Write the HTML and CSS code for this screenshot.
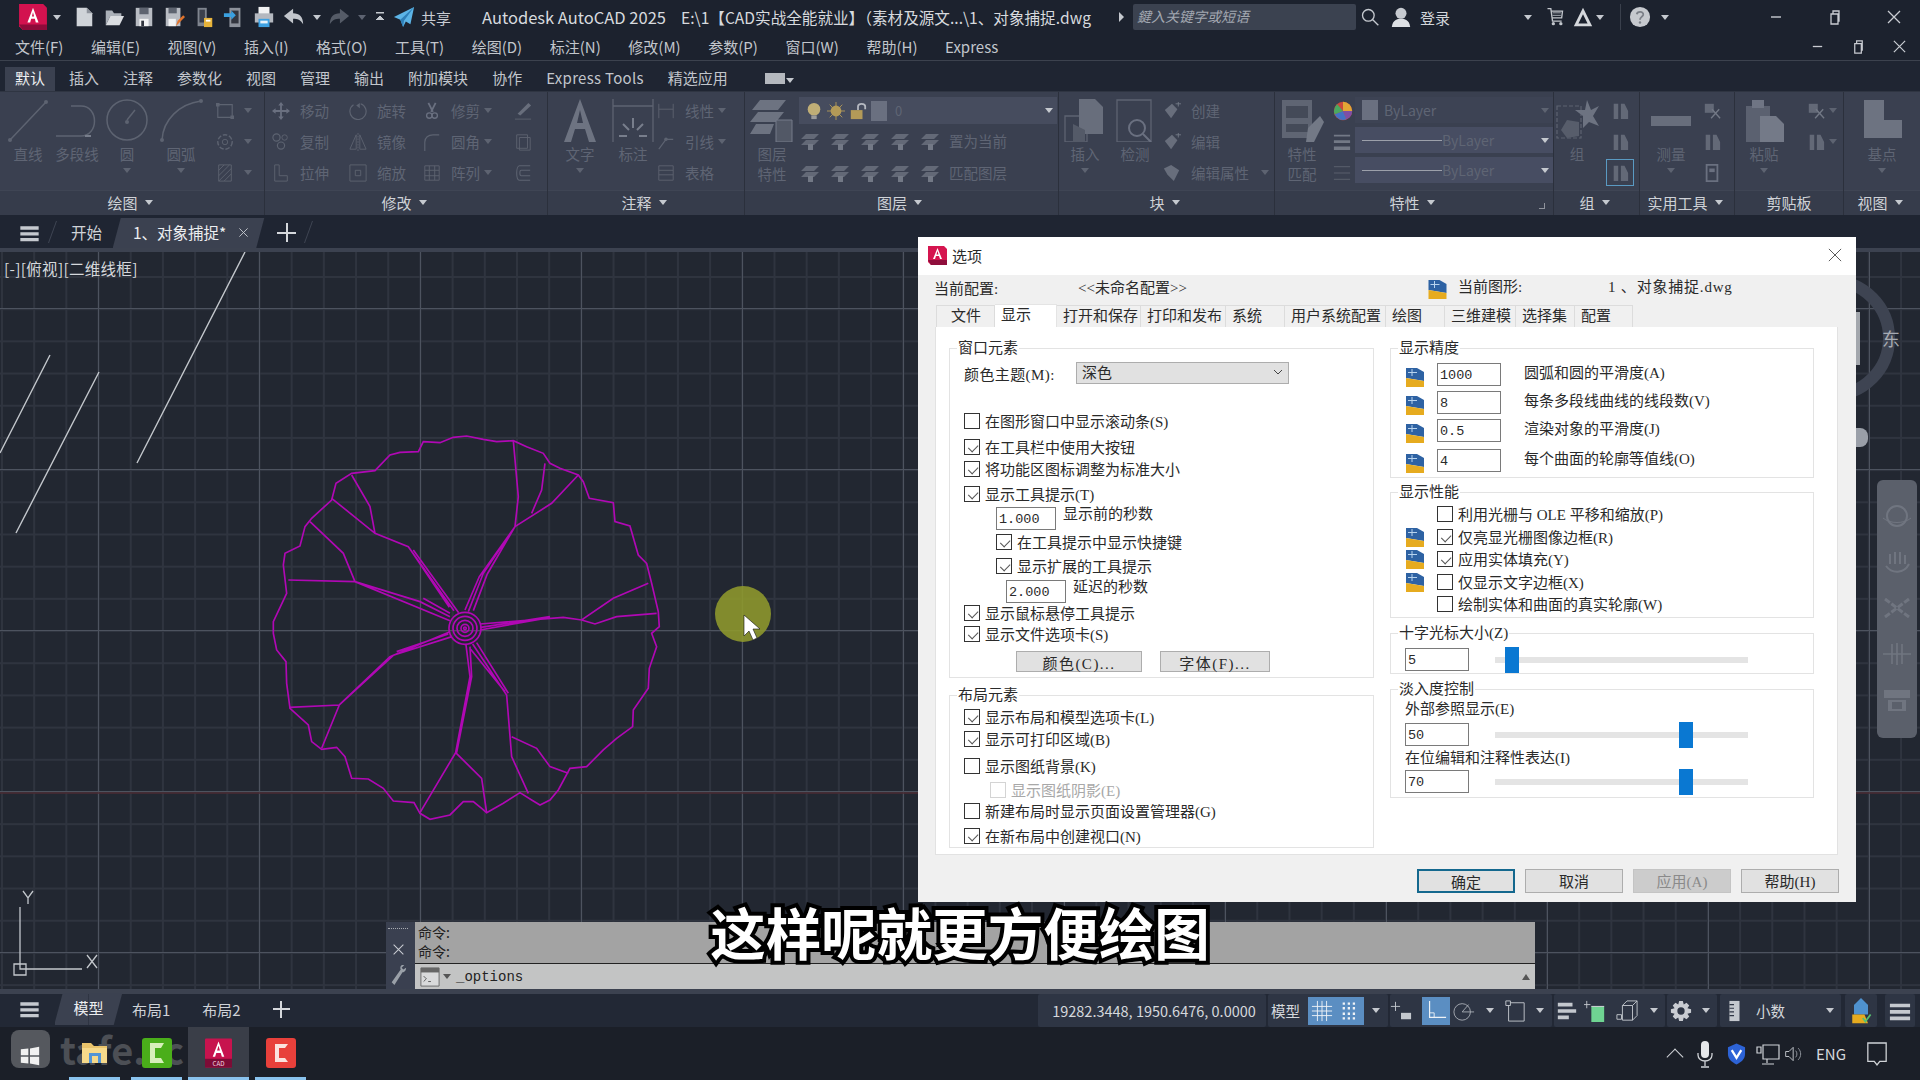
FILE: index.html
```html
<!DOCTYPE html>
<html lang="zh-CN">
<head>
    <meta charset="UTF-8">
    <title>AutoCAD 2025 - 选项</title>
    <link rel="stylesheet" href="styles.css">
</head>
<body>
<svg class="defs" width="0" height="0">
    <symbol id="a-logo" viewBox="0 0 30 28"><path d="M0 0H26L30 4V28H4L0 24Z" fill="#d3124f"/><path d="M0 22H30V28H4Z" fill="#8e0b3a"/><path d="M15 4L21 20H18L17 16H13L12 20H9ZM15 9L13.8 13.5H16.2Z" fill="#fff"/></symbol>
    <symbol id="q-new" viewBox="0 0 24 24"><path d="M4 2H15L21 8V22H4Z" fill="#cfd3d8"/><path d="M15 2V8H21Z" fill="#8e939c"/></symbol>
    <symbol id="q-open" viewBox="0 0 24 24"><path d="M3 21V5H10L12 8H20V11H8L3 21Z" fill="#aab0b8"/><path d="M3 21L8 11H23L18 21Z" fill="#dadde1"/></symbol>
    <symbol id="q-save" viewBox="0 0 24 24"><path d="M3 2H21V22H3Z" fill="#b8bcc3"/><path d="M7 2H17V9H7Z" fill="#5e6470"/><path d="M7 14H17V22H7Z" fill="#f2f3f4"/><path d="M9 16H12V22H9Z" fill="#30343e"/></symbol>
    <symbol id="q-saveas" viewBox="0 0 24 24"><path d="M3 2H19V22H3Z" fill="#b8bcc3"/><path d="M6 2H15V8H6Z" fill="#5e6470"/><path d="M6 14H14V22H6Z" fill="#f2f3f4"/><path d="M14 22L16 16L22 10L24 12L18 18Z" fill="#e0732c"/></symbol>
    <symbol id="q-cloud" viewBox="0 0 24 24"><path d="M5 2H15V22H5Z" fill="#7f858f"/><path d="M7 4H13V18H7Z" fill="#3b404c"/><path d="M12 13H21V23H12Z" fill="#e8b43a"/><path d="M14 15H19V17H14Z" fill="#fff"/></symbol>
    <symbol id="q-phone" viewBox="0 0 24 24"><path d="M7 2H19V23H7Z" fill="#8d929b"/><path d="M9 5H17V19H9Z" fill="#33363f"/><path d="M1 8H9V5L14 10L9 15V12H1Z" fill="#3aa0e0"/></symbol>
    <symbol id="q-print" viewBox="0 0 24 24"><path d="M6 1H18V9H6Z" fill="#f1f2f3"/><path d="M2 8H22V18H2Z" fill="#b4b8bf"/><path d="M6 14H18V23H6Z" fill="#3da1e2"/><path d="M8 16H16V19H8Z" fill="#e7f3fb"/></symbol>
    <symbol id="q-undo" viewBox="0 0 24 24"><path d="M1 11L11 3V8C18 8 22 12 22 20C19 15 16 14 11 14V19Z" fill="#c2c6cc"/></symbol>
    <symbol id="q-redo" viewBox="0 0 24 24"><path d="M23 11L13 3V8C6 8 2 12 2 20C5 15 8 14 13 14V19Z" fill="#555b67"/></symbol>
    <symbol id="q-share" viewBox="0 0 24 24"><path d="M23 1L1 12L8 15L11 23L14 17L19 20Z" fill="#5cb4e6"/><path d="M23 1L8 15L11 23L12 16Z" fill="#2e7fb8"/></symbol>
    <symbol id="w-search" viewBox="0 0 24 24"><circle cx="10" cy="10" r="7" fill="none" stroke="#c5c9cf" stroke-width="1.6"/><path d="M15 15L22 22" stroke="#c5c9cf" stroke-width="1.6"/></symbol>
    <symbol id="w-user" viewBox="0 0 24 24"><circle cx="12" cy="8" r="6" fill="#c6cad0"/><path d="M2 23C3 15 8 14 12 14S21 15 22 23Z" fill="#dde0e4"/></symbol>
    <symbol id="w-cart" viewBox="0 0 24 24"><path d="M3 2H7L9 17H20M8 5H21L20 13H9" fill="none" stroke="#c2c6cc" stroke-width="1.6"/><path d="M9 7H19M9 10H19" stroke="#c2c6cc"/><circle cx="10" cy="20" r="2" fill="#c2c6cc"/><circle cx="19" cy="20" r="2" fill="#c2c6cc"/></symbol>
    <symbol id="w-tri" viewBox="0 0 24 24"><path d="M12 2L22 22H2ZM12 9L7 19H17Z" fill="#d5d8dc" fill-rule="evenodd"/></symbol>
    <symbol id="w-help" viewBox="0 0 24 24"><circle cx="12" cy="12" r="11" fill="#c6c9ce"/><path d="M8.500 9C9 5.500 16 5.500 15.500 9.500C15 12 12 12 12 15" fill="none" stroke="#7c8088" stroke-width="2"/><circle cx="12" cy="18" r="1.300" fill="#7c8088"/></symbol>
    <symbol id="w-min" viewBox="0 0 16 16"><path d="M3 8H13" stroke="#c9ccd2" stroke-width="1.400"/></symbol>
    <symbol id="w-max" viewBox="0 0 16 16"><path d="M4 5H11V15H4ZM6 5V2H12V12H11" fill="none" stroke="#c9ccd2" stroke-width="1.300"/></symbol>
    <symbol id="w-close" viewBox="0 0 16 16"><path d="M2 2L14 14M14 2L2 14" stroke="#c9ccd2" stroke-width="1.300"/></symbol>

    <symbol id="r-line" viewBox="0 0 44 44"><path d="M4 42L40 4" stroke="#5d6371" stroke-width="1.500"/><circle cx="4" cy="42" r="2" fill="#5d6371"/><circle cx="40" cy="4" r="2" fill="#5d6371"/></symbol>
    <symbol id="r-pline" viewBox="0 0 44 44"><path d="M1 38H26C44 38 44 8 26 8H16" fill="none" stroke="#5d6371" stroke-width="1.500"/><path d="M30 38L36 38" stroke="#787e8c" stroke-width="2"/></symbol>
    <symbol id="r-circle" viewBox="0 0 44 44"><circle cx="22" cy="22" r="20" fill="none" stroke="#5d6371" stroke-width="1.500"/><path d="M22 22L30 12" stroke="#5d6371" stroke-width="1.500"/><circle cx="22" cy="24" r="2" fill="#5d6371"/></symbol>
    <symbol id="r-arc" viewBox="0 0 44 44"><path d="M3 42C4 22 20 6 42 3" fill="none" stroke="#5d6371" stroke-width="1.500"/><circle cx="3" cy="42" r="2" fill="#5d6371"/><circle cx="42" cy="3" r="2" fill="#5d6371"/></symbol>
    <symbol id="r-text" viewBox="0 0 44 44"><path d="M22 1L38 44H31L27 31H17L13 44H6ZM22 12L19 25H25Z" fill="#6d7381" fill-rule="evenodd"/></symbol>
    <symbol id="r-dim" viewBox="0 0 44 44"><path d="M2 1V44M42 1V44M2 8H42" fill="none" stroke="#5d6371" stroke-width="1.300"/><path d="M22 20V30M12 26L18 32M32 26L26 32M8 38H16M28 38H36" stroke="#787e8c" stroke-width="2"/></symbol>
    <symbol id="r-layers" viewBox="0 0 44 44"><path d="M10 2H36L28 12H2ZM8 14H34L26 24H0ZM6 26H24L20 36H0Z" fill="#6d7381"/><path d="M26 22H42V44H26Z" fill="#525866" stroke="#757b89"/></symbol>
    <symbol id="r-insert" viewBox="0 0 44 44"><path d="M2 18H24V44H2Z" fill="none" stroke="#5d6371" stroke-width="1.300"/><path d="M16 1H32L40 9V36H16Z" fill="#686e7c"/><path d="M10 26L22 32V44H10Z" fill="#545a68"/></symbol>
    <symbol id="r-detect" viewBox="0 0 44 44"><path d="M4 2H38V44H4Z" fill="none" stroke="#5d6371" stroke-width="1.300"/><circle cx="24" cy="30" r="8" fill="none" stroke="#6a7080" stroke-width="2"/><path d="M30 36L38 44" stroke="#6a7080" stroke-width="2"/></symbol>
    <symbol id="r-match" viewBox="0 0 44 44"><path d="M2 2H32V40H2Z" fill="#5f6573"/><path d="M6 8H28V20H6ZM6 26H28V34H6Z" fill="#444a58"/><path d="M28 30L40 18L44 24L34 44H26Z" fill="#737986"/></symbol>
    <symbol id="r-wheel" viewBox="0 0 24 24"><circle cx="12" cy="12" r="11" fill="#c9483e"/><path d="M12 12V1A11 11 0 0 1 23 12Z" fill="#e3a635"/><path d="M12 12H23A11 11 0 0 1 16 22Z" fill="#7e4fa6"/><path d="M12 12L16 22A11 11 0 0 1 2 16Z" fill="#4471c4"/><path d="M12 12L2 16A11 11 0 0 1 5 4Z" fill="#4aa85f"/></symbol>
    <symbol id="r-group" viewBox="0 0 44 44"><path d="M2 8V40H26V8Z" fill="none" stroke="#5d6371" stroke-width="1.200" stroke-dasharray="4 2"/><path d="M32 2L36 12L44 8L38 18L44 28L34 24L28 30L28 18L20 12H30Z" fill="#6d7381"/><path d="M12 22L24 24V38L12 40L6 32Z" fill="#575d6b"/></symbol>
    <symbol id="r-measure" viewBox="0 0 44 44"><path d="M2 18H42V28H2Z" fill="#686e7c"/></symbol>
    <symbol id="r-paste" viewBox="0 0 44 44"><path d="M4 8H28V44H4Z" fill="#5b6170"/><path d="M10 2H22V10H10Z" fill="#6f7584"/><path d="M18 18H34L42 26V44H18Z" fill="#747a88"/></symbol>
    <symbol id="r-base" viewBox="0 0 44 44"><path d="M4 2H24V22H42V40H4Z" fill="#6d7381"/></symbol>

    <symbol id="s-rect" viewBox="0 0 20 20"><path d="M2 3H18V17H2Z" fill="none" stroke="#5d6371" stroke-width="1.300"/><path d="M0 1H4V5H0ZM16 15H20V19H16Z" fill="#5d6371"/></symbol>
    <symbol id="s-hatch" viewBox="0 0 20 20"><path d="M3 1H17V19H3Z" fill="none" stroke="#5d6371"/><path d="M3 7L9 1M3 13L15 1M3 19L17 5M9 19L17 11" stroke="#5d6371"/></symbol>
    <symbol id="s-ring" viewBox="0 0 20 20"><circle cx="10" cy="10" r="8" fill="none" stroke="#5d6371" stroke-width="1.600" stroke-dasharray="5 2"/><circle cx="10" cy="10" r="3" fill="none" stroke="#5d6371"/></symbol>
    <symbol id="s-move" viewBox="0 0 20 20"><path d="M10 0L13 4H11V9H16V7L20 10L16 13V11H11V16H13L10 20L7 16H9V11H4V13L0 10L4 7V9H9V4H7Z" fill="#6a7080"/></symbol>
    <symbol id="s-rotate" viewBox="0 0 20 20"><path d="M5 3A9 9 0 1 0 13 2" fill="none" stroke="#5d6371" stroke-width="1.300"/><path d="M12 1V7L8 4Z" fill="#5d6371"/></symbol>
    <symbol id="s-trim" viewBox="0 0 20 20"><path d="M6 1L11 11M14 1L9 11" stroke="#6a7080" stroke-width="2"/><circle cx="7" cy="15" r="3" fill="none" stroke="#6a7080" stroke-width="1.500"/><circle cx="13" cy="15" r="3" fill="none" stroke="#6a7080" stroke-width="1.500"/></symbol>
    <symbol id="s-erase" viewBox="0 0 20 20"><path d="M16 1L19 4L7 15L4 13Z" fill="#686e7c"/><path d="M1 19H19" stroke="#5d6371"/></symbol>
    <symbol id="s-copy" viewBox="0 0 20 20"><circle cx="5" cy="5" r="4" fill="none" stroke="#5d6371" stroke-width="1.300"/><circle cx="14" cy="5" r="3" fill="none" stroke="#5d6371"/><circle cx="10" cy="14" r="4" fill="none" stroke="#5d6371" stroke-width="1.300"/></symbol>
    <symbol id="s-mirror" viewBox="0 0 20 20"><path d="M8 2L1 18H8ZM12 2L19 18H12Z" fill="none" stroke="#5d6371"/><path d="M10 0V20" stroke="#5d6371" stroke-dasharray="2 1"/></symbol>
    <symbol id="s-fillet" viewBox="0 0 20 20"><path d="M2 20V10C2 5 6 2 11 2H18" fill="none" stroke="#5d6371" stroke-width="1.300"/></symbol>
    <symbol id="s-stretch" viewBox="0 0 20 20"><path d="M3 1V19H17V13H8V1Z" fill="none" stroke="#5d6371"/></symbol>
    <symbol id="s-scale" viewBox="0 0 20 20"><path d="M1 1H19V19H1Z" fill="none" stroke="#5d6371"/><path d="M7 7H13V13H7Z" fill="none" stroke="#5d6371"/></symbol>
    <symbol id="s-array" viewBox="0 0 20 20"><path d="M2 2H18V18H2ZM2 7H18M2 13H18M7 2V18M13 2V18" fill="none" stroke="#5d6371"/></symbol>
    <symbol id="s-explode" viewBox="0 0 20 20"><path d="M3 2H15V17H3ZM6 5H18V19H6Z" fill="none" stroke="#5d6371"/></symbol>
    <symbol id="s-offset" viewBox="0 0 20 20"><path d="M18 2H6C2 2 2 18 6 18H18M18 7H8C6 7 6 13 8 13H18" fill="none" stroke="#5d6371" stroke-width="1.200"/></symbol>
    <symbol id="s-dimline" viewBox="0 0 20 20"><path d="M2 2V18M18 2V18M2 8H18" stroke="#5d6371" fill="none"/></symbol>
    <symbol id="s-leader" viewBox="0 0 20 20"><path d="M2 18L10 7H18" fill="none" stroke="#5d6371" stroke-width="1.300"/><circle cx="10" cy="7" r="2" fill="#5d6371"/></symbol>
    <symbol id="s-table" viewBox="0 0 20 20"><path d="M2 2H18V18H2ZM2 7H18M2 12H18" fill="none" stroke="#5d6371"/></symbol>
    <symbol id="s-lay" viewBox="0 0 20 20"><path d="M6 3H19L14 8H1ZM6 9H19L14 14H1Z" fill="#636977"/><path d="M8 13H13V19H8Z" fill="#737986"/></symbol>
    <symbol id="s-create" viewBox="0 0 20 20"><path d="M2 9L10 2L16 8L9 18Z" fill="#686e7c"/><path d="M14 2H20M17 0V5" stroke="#737986"/></symbol>
    <symbol id="s-attr" viewBox="0 0 20 20"><path d="M1 5L9 1L18 7L12 19L5 12Z" fill="#686e7c"/></symbol>
    <symbol id="s-weight" viewBox="0 0 20 20"><path d="M1 2H19V4H1ZM1 8H19V11H1ZM1 15H19V19H1Z" fill="#737986"/></symbol>
    <symbol id="s-ltype" viewBox="0 0 20 20"><path d="M1 3H19M1 10H19M1 17H19" stroke="#5d6371"/></symbol>
    <symbol id="s-sel" viewBox="0 0 20 20"><path d="M3 2H8V19H3ZM11 2H15L19 10V19H11Z" fill="#636977"/></symbol>
    <symbol id="s-cut" viewBox="0 0 20 20"><path d="M2 2H12V12H2Z" fill="#636977"/><path d="M10 8L19 18M18 8L9 18" stroke="#737986" stroke-width="1.500"/></symbol>
    <symbol id="s-calc" viewBox="0 0 20 20"><path d="M4 1H16V19H4Z" fill="none" stroke="#6a7080" stroke-width="2"/><path d="M7 5H13V9H7Z" fill="#6a7080"/></symbol>
    <symbol id="s-bulb" viewBox="0 0 20 20"><circle cx="10" cy="8" r="7" fill="#c0ae76"/><path d="M7 15H13V19H7Z" fill="#9b9b9b"/></symbol>
    <symbol id="s-sun" viewBox="0 0 20 20"><circle cx="10" cy="10" r="6" fill="#b39a58"/><path d="M10 0V20M0 10H20M3 3L17 17M17 3L3 17" stroke="#b39a58"/></symbol>
    <symbol id="s-lock" viewBox="0 0 20 20"><path d="M2 9H15V19H2Z" fill="#b39a58"/><path d="M10 9V5C10 1 18 1 18 5V8" fill="none" stroke="#b4b8c0" stroke-width="2"/></symbol>

    <symbol id="d-a" viewBox="0 0 19 20"><path d="M0 1H16L19 4V20H3L0 17Z" fill="#d5154f"/><path d="M0 15H19V20H3Z" fill="#8f0e3c"/><path d="M9.500 3L14 14H12L11 11H8L7 14H5ZM9.500 6L8.500 9.500H10.500Z" fill="#fff"/></symbol>
    <symbol id="d-dwg" viewBox="0 0 18 20"><path d="M0 1H11L18 5V14L0 11Z" fill="#2e62a3"/><path d="M0 11L18 14V20H0Z" fill="#e6ab1f"/><path d="M6 2V9M2 5.500H11" stroke="#b7d3ee"/></symbol>

    <symbol id="b-grid" viewBox="0 0 24 24"><path d="M7 1V23M17 1V23M1 7H23M1 17H23M12 1V23M1 12H23" stroke="#f0f3f7"/></symbol>
    <symbol id="b-dots" viewBox="0 0 24 24"><path d="M4 4H20M4 9H20M4 15H20M4 20H20" stroke="#f0f3f7" stroke-width="2.500" stroke-dasharray="2.500 3"/></symbol>
    <symbol id="b-snap" viewBox="0 0 24 24"><path d="M6 2V12M1 7H11" stroke="#c4c8ce"/><path d="M12 14H23V21H12Z" fill="#c4c8ce"/></symbol>
    <symbol id="b-ortho" viewBox="0 0 24 24"><path d="M5 1V19H23" fill="none" stroke="#eef2f6" stroke-width="1.300"/><path d="M5 14H10V19" fill="none" stroke="#eef2f6"/></symbol>
    <symbol id="b-polar" viewBox="0 0 24 24"><circle cx="10" cy="13" r="9" fill="none" stroke="#a7acb4"/><path d="M10 13L17 5M10 13H23" stroke="#a7acb4"/></symbol>
    <symbol id="b-box" viewBox="0 0 24 24"><path d="M5 3H22V23H5Z" fill="none" stroke="#c4c8ce"/><path d="M2 1H7V6H2Z" fill="#2e3544" stroke="#c4c8ce"/></symbol>
    <symbol id="b-lines" viewBox="0 0 24 24"><path d="M2 3H18V7H2ZM2 10H22V14H2ZM2 17H14V21H2Z" fill="#c4c8ce"/></symbol>
    <symbol id="b-green" viewBox="0 0 24 24"><path d="M8 7H22V24H8Z" fill="#6fd492"/><path d="M3 1V9M0 5H7" stroke="#c4c8ce"/><path d="M8 7H22" stroke="#d9dce0"/></symbol>
    <symbol id="b-cube" viewBox="0 0 24 24"><path d="M7 6L12 1H23V17L18 22H7ZM7 6H18V22M18 6L23 1" fill="none" stroke="#c4c8ce"/><path d="M1 16H6V21H1Z" fill="#2e3544" stroke="#c4c8ce"/></symbol>
    <symbol id="b-gear" viewBox="0 0 24 24"><path d="M10 1H14L15 5L18 3L21 6L19 9L23 10V14L19 15L21 18L18 21L15 19L14 23H10L9 19L6 21L3 18L5 15L1 14V10L5 9L3 6L6 3L9 5ZM12 8A4 4 0 1 0 12 16A4 4 0 1 0 12 8Z" fill="#c9ccd2" fill-rule="evenodd"/></symbol>
    <symbol id="b-ruler" viewBox="0 0 24 24"><path d="M7 1H18V23H7Z" fill="#c4c8ce"/><path d="M7 5H12M7 9H12M7 13H12M7 17H12" stroke="#2e3544" stroke-width="1.300"/></symbol>
    <symbol id="b-annot" viewBox="0 0 24 32"><path d="M12 1L20 9H4Z" fill="#4f92cf"/><path d="M4 9H20V20H4Z" fill="#4f92cf"/><path d="M2 20H16L20 30H2Z" fill="#e6ab1f"/><path d="M14 24L17 28L23 20" fill="none" stroke="#56c06f" stroke-width="2"/></symbol>
    <symbol id="b-menu" viewBox="0 0 24 24"><path d="M1 4H23V8H1ZM1 11H23V15H1ZM1 18H23V22H1Z" fill="#c5c9cf"/></symbol>
    <symbol id="b-wrench" viewBox="0 0 20 24"><path d="M15 1C13 1 12 4 13 6L3 20L6 23L15 9C18 9 19 6 19 4L16 6L14 4L17 1Z" fill="#9aa0a8"/></symbol>
    <symbol id="b-cmd" viewBox="0 0 22 22"><path d="M1 1H21V21H1Z" fill="#d9dadb" stroke="#666"/><path d="M1 1H21V6H1Z" fill="#666"/><path d="M4 10L7 13L4 16M9 16H12" fill="none" stroke="#555"/></symbol>

    <symbol id="t-win" viewBox="0 0 24 24"><path d="M1 4L10 3V11H1ZM12 3L23 1V11H12ZM1 13H10V21L1 20ZM12 13H23V23L12 21Z" fill="#f1f1f1"/></symbol>
    <symbol id="t-folder" viewBox="0 0 28 24"><path d="M1 2H10L13 5H26V22H1Z" fill="#e9c36b"/><path d="M1 7H26V22H1Z" fill="#f6d98a"/><path d="M8 12H20V22H17V15H11V22H8Z" fill="#5294d6"/></symbol>
    <symbol id="t-cam" viewBox="0 0 30 30"><rect width="30" height="30" rx="3" fill="#4aae1a"/><path d="M22 5H8V25H22L19 20H13V10H19Z" fill="#d6efb9"/></symbol>
    <symbol id="t-red" viewBox="0 0 30 30"><rect width="30" height="30" rx="3" fill="#e8403b"/><path d="M22 6H9V24H22L19 20H13V10H19Z" fill="#fbe2de"/></symbol>
    <symbol id="t-mic" viewBox="0 0 16 28"><rect x="4" y="1" width="8" height="17" rx="4" fill="#e4e6e9"/><path d="M1 13V15C1 23 15 23 15 15V13M8 21V26M4 27H12" fill="none" stroke="#d0d3d7" stroke-width="1.300"/></symbol>
    <symbol id="t-shield" viewBox="0 0 20 24"><path d="M10 1L19 5V12C19 18 14 21 10 23C6 21 1 18 1 12V5Z" fill="#2d63d6"/><path d="M5 8L10 16L15 8" fill="none" stroke="#fff" stroke-width="2.400"/></symbol>
    <symbol id="t-net" viewBox="0 0 24 24"><path d="M7 3H23V17H7ZM1 5H5V11H1ZM11 17V21M6 22H18" fill="none" stroke="#d0d3d7" stroke-width="1.200"/></symbol>
    <symbol id="t-vol" viewBox="0 0 24 24"><path d="M2 9H6L11 4V20L6 15H2Z" fill="none" stroke="#b8bcc2" stroke-width="1.200"/><path d="M14 8C16 10 16 14 14 16M17 5C21 9 21 15 17 19" fill="none" stroke="#8e939b" stroke-width="1.200"/></symbol>
    <symbol id="t-note" viewBox="0 0 24 28"><path d="M2 2H22V22H15L12 26L9 22H2Z" fill="none" stroke="#d0d3d7" stroke-width="1.400"/></symbol>
    <symbol id="v-orbit" viewBox="0 0 30 24"><circle cx="15" cy="12" r="10" fill="none" stroke="#787d88" stroke-width="2"/><path d="M1 14C8 20 22 20 29 14" fill="none" stroke="#787d88"/></symbol>
    <symbol id="v-pan" viewBox="0 0 30 24"><path d="M8 4V14M13 2V14M18 2V14M23 5V14M4 16C10 24 22 24 27 14" fill="none" stroke="#787d88" stroke-width="2"/></symbol>
    <symbol id="v-zoom" viewBox="0 0 30 24"><path d="M3 3L27 21M27 3L3 21" stroke="#787d88" stroke-width="3" stroke-dasharray="6 2"/></symbol>
    <symbol id="v-wheel" viewBox="0 0 30 24"><path d="M10 2V22M15 1V23M20 2V22M1 12H29" stroke="#787d88" stroke-width="1.600"/></symbol>
    <symbol id="v-show" viewBox="0 0 30 24"><path d="M2 2H28V10H2ZM6 12H24V23H6Z" fill="#787d88"/><path d="M10 14H20V21H10Z" fill="#5b606b"/></symbol>
</svg>

<div class="app">
    <header class="titlebar">
        <svg class="logo"><use href="#a-logo"/></svg>
        <i class="caret c12"></i>
        <svg class="qa"><use href="#q-new"/></svg>
        <svg class="qa"><use href="#q-open"/></svg>
        <svg class="qa"><use href="#q-save"/></svg>
        <svg class="qa"><use href="#q-saveas"/></svg>
        <svg class="qa"><use href="#q-cloud"/></svg>
        <svg class="qa"><use href="#q-phone"/></svg>
        <svg class="qa"><use href="#q-print"/></svg>
        <svg class="qa"><use href="#q-undo"/></svg>
        <i class="caret c16"></i>
        <svg class="qa qa-redo"><use href="#q-redo"/></svg>
        <i class="caret c18 dim"></i>
        <span class="qa-more"></span>
        <svg class="qa"><use href="#q-share"/></svg>
        <span class="share">共享</span>
        <span class="app-name">Autodesk AutoCAD 2025</span>
        <span class="doc-name">E:\1【CAD实战全能就业】（素材及源文...\1、对象捕捉.dwg</span>
        <span class="arrow-r"></span>
        <div class="search">鍵入关键字或短语</div>
        <svg class="top-search"><use href="#w-search"/></svg>
        <svg class="top-user"><use href="#w-user"/></svg>
        <span class="login">登录</span>
        <i class="caret c12 login-caret"></i>
        <svg class="top-cart"><use href="#w-cart"/></svg>
        <svg class="top-tri"><use href="#w-tri"/></svg>
        <i class="caret c12"></i>
        <span class="top-sep"></span>
        <svg class="top-help"><use href="#w-help"/></svg>
        <i class="caret c12"></i>
        <div class="winbtns">
            <svg><use href="#w-min"/></svg>
            <svg><use href="#w-max"/></svg>
            <svg><use href="#w-close"/></svg>
        </div>
    </header>

    <nav class="menubar">
        <span>文件(F)</span><span>编辑(E)</span><span>视图(V)</span><span>插入(I)</span><span>格式(O)</span><span>工具(T)</span><span>绘图(D)</span><span>标注(N)</span><span>修改(M)</span><span>参数(P)</span><span>窗口(W)</span><span>帮助(H)</span><span>Express</span>
        <div class="subbtns">
            <svg><use href="#w-min"/></svg>
            <svg><use href="#w-max"/></svg>
            <svg><use href="#w-close"/></svg>
        </div>
    </nav>

    <nav class="ribtabs">
        <span class="on">默认</span><span>插入</span><span>注释</span><span>参数化</span><span>视图</span><span>管理</span><span>输出</span><span>附加模块</span><span>协作</span><span class="ext">Express Tools</span><span>精选应用</span>
        <b class="rib-switch"></b><i class="caret c10"></i>
    </nav>

    <section class="ribbon">
        <div class="rpanel p-draw">
            <div class="rbody">
                <div class="big w56"><svg><use href="#r-line"/></svg><span>直线</span></div>
                <div class="big w42"><svg><use href="#r-pline"/></svg><span>多段线</span></div>
                <div class="big w58"><svg><use href="#r-circle"/></svg><span>圆</span><i class="caret c12 dim"></i></div>
                <div class="big w50"><svg><use href="#r-arc"/></svg><span>圆弧</span><i class="caret c12 dim"></i></div>
                <div class="col3 col-draw">
                    <div class="sm"><svg><use href="#s-rect"/></svg><i class="caret c16 dim"></i></div>
                    <div class="sm"><svg><use href="#s-ring"/></svg><i class="caret c16 dim"></i></div>
                    <div class="sm"><svg><use href="#s-hatch"/></svg><i class="caret c16 dim"></i></div>
                </div>
            </div>
            <div class="rtitle">绘图<i class="caret c16"></i></div>
        </div>

        <div class="rpanel p-modify">
            <div class="rbody modify-grid">
                <div class="sm"><svg><use href="#s-move"/></svg><span>移动</span></div>
                <div class="sm"><svg><use href="#s-rotate"/></svg><span>旋转</span></div>
                <div class="sm"><svg><use href="#s-trim"/></svg><span>修剪</span><i class="caret c16 dim"></i></div>
                <div class="sm"><svg><use href="#s-erase"/></svg></div>
                <div class="sm"><svg><use href="#s-copy"/></svg><span>复制</span></div>
                <div class="sm"><svg><use href="#s-mirror"/></svg><span>镜像</span></div>
                <div class="sm"><svg><use href="#s-fillet"/></svg><span>圆角</span><i class="caret c16 dim"></i></div>
                <div class="sm"><svg><use href="#s-explode"/></svg></div>
                <div class="sm"><svg><use href="#s-stretch"/></svg><span>拉伸</span></div>
                <div class="sm"><svg><use href="#s-scale"/></svg><span>缩放</span></div>
                <div class="sm"><svg><use href="#s-array"/></svg><span>阵列</span><i class="caret c16 dim"></i></div>
                <div class="sm"><svg><use href="#s-offset"/></svg></div>
            </div>
            <div class="rtitle">修改<i class="caret c16"></i></div>
        </div>

        <div class="rpanel p-note">
            <div class="rbody">
                <div class="big w64"><svg><use href="#r-text"/></svg><span>文字</span><i class="caret c12 dim"></i></div>
                <div class="big w42"><svg><use href="#r-dim"/></svg><span>标注</span></div>
                <div class="col3 col-note">
                    <div class="sm"><svg><use href="#s-dimline"/></svg><span>线性</span><i class="caret c16 dim"></i></div>
                    <div class="sm"><svg><use href="#s-leader"/></svg><span>引线</span><i class="caret c16 dim"></i></div>
                    <div class="sm"><svg><use href="#s-table"/></svg><span>表格</span></div>
                </div>
            </div>
            <div class="rtitle">注释<i class="caret c16"></i></div>
        </div>

        <div class="rpanel p-layer">
            <div class="rbody">
                <div class="big w54"><svg><use href="#r-layers"/></svg><span>图层<br>特性</span></div>
                <div class="layer-side">
                    <div class="layer-drop">
                        <svg><use href="#s-bulb"/></svg><svg><use href="#s-sun"/></svg><svg><use href="#s-lock"/></svg>
                        <b class="swatch"></b><span>0</span><i class="caret c16 drop-caret"></i>
                    </div>
                    <div class="layer-row">
                        <svg><use href="#s-lay"/></svg><svg><use href="#s-lay"/></svg><svg><use href="#s-lay"/></svg><svg><use href="#s-lay"/></svg><svg><use href="#s-lay"/></svg>
                        <span>置为当前</span>
                    </div>
                    <div class="layer-row">
                        <svg><use href="#s-lay"/></svg><svg><use href="#s-lay"/></svg><svg><use href="#s-lay"/></svg><svg><use href="#s-lay"/></svg><svg><use href="#s-lay"/></svg>
                        <span>匹配图层</span>
                    </div>
                </div>
            </div>
            <div class="rtitle">图层<i class="caret c16"></i></div>
        </div>

        <div class="rpanel p-block">
            <div class="rbody">
                <div class="big w52"><svg><use href="#r-insert"/></svg><span>插入</span><i class="caret c12 dim"></i></div>
                <div class="big w48"><svg><use href="#r-detect"/></svg><span>检测</span></div>
                <div class="col3 col-block">
                    <div class="sm"><svg><use href="#s-create"/></svg><span>创建</span></div>
                    <div class="sm"><svg><use href="#s-create"/></svg><span>编辑</span></div>
                    <div class="sm"><svg><use href="#s-attr"/></svg><span>编辑属性</span><i class="caret c16 dim"></i></div>
                </div>
            </div>
            <div class="rtitle">块<i class="caret c16"></i></div>
        </div>

        <div class="rpanel p-prop">
            <div class="rbody">
                <div class="big w54"><svg><use href="#r-match"/></svg><span>特性<br>匹配</span></div>
                <div class="col3 col-prop">
                    <svg class="wheel"><use href="#r-wheel"/></svg>
                    <div class="sm"><svg><use href="#s-weight"/></svg></div>
                    <div class="sm"><svg><use href="#s-ltype"/></svg></div>
                </div>
                <div class="prop-drops">
                    <div class="pdrop first"><b class="swatch"></b><span>ByLayer</span><i class="caret c16 dim"></i></div>
                    <div class="pdrop"><u></u><span>ByLayer</span><i class="caret c16"></i></div>
                    <div class="pdrop"><u></u><span>ByLayer</span><i class="caret c16"></i></div>
                </div>
            </div>
            <div class="rtitle">特性<i class="caret c16"></i><em class="launcher"></em></div>
        </div>

        <div class="rpanel p-group">
            <div class="rbody">
                <div class="big w46"><svg><use href="#r-group"/></svg><span>组</span></div>
                <div class="col3 col-gr">
                    <div class="sm"><svg><use href="#s-sel"/></svg></div>
                    <div class="sm"><svg><use href="#s-sel"/></svg></div>
                    <div class="sm active-tool"><svg><use href="#s-sel"/></svg></div>
                </div>
            </div>
            <div class="rtitle">组<i class="caret c16"></i></div>
        </div>

        <div class="rpanel p-util">
            <div class="rbody">
                <div class="big w62"><svg><use href="#r-measure"/></svg><span>测量</span><i class="caret c12 dim"></i></div>
                <div class="col3">
                    <div class="sm"><svg><use href="#s-cut"/></svg></div>
                    <div class="sm"><svg><use href="#s-sel"/></svg></div>
                    <div class="sm"><svg><use href="#s-calc"/></svg></div>
                </div>
            </div>
            <div class="rtitle">实用工具<i class="caret c16"></i></div>
        </div>

        <div class="rpanel p-clip">
            <div class="rbody">
                <div class="big w58"><svg><use href="#r-paste"/></svg><span>粘贴</span><i class="caret c12 dim"></i></div>
                <div class="col3">
                    <div class="sm"><svg><use href="#s-cut"/></svg><i class="caret c16 dim"></i></div>
                    <div class="sm"><svg><use href="#s-sel"/></svg><i class="caret c16 dim"></i></div>
                </div>
            </div>
            <div class="rtitle">剪贴板</div>
        </div>

        <div class="rpanel p-view">
            <div class="rbody">
                <div class="big w76"><svg><use href="#r-base"/></svg><span>基点</span><i class="caret c12 dim"></i></div>
            </div>
            <div class="rtitle">视图<i class="caret c16"></i></div>
        </div>
    </section>

    <nav class="doctabs">
        <svg class="menu-ico"><use href="#b-menu"/></svg>
        <span class="dsep"></span>
        <span class="start">开始</span>
        <div class="doc-on"><span>1、对象捕捉*</span><svg><use href="#w-close"/></svg></div>
        <span class="plus"></span>
        <span class="dsep"></span>
    </nav>
    <div class="band"></div>

    <main class="canvas">
        <svg class="drawing" viewBox="0 252 1920 737">
            <g stroke="#c3c7cc" stroke-width="1.400">
                <path d="M50 355L0 453M99 372L16 533M245 252L137 463"/>
            </g>
            <path d="M0 793H1920" stroke="#4b2b33" stroke-width="1.500"/>
            <g transform="translate(250 420) scale(.3333)" fill="none" stroke="#b008b4" stroke-width="5">
                <path d="M520 65L570 68 610 52 650 48 700 58 740 65 790 62 830 80 880 100 900 130 930 145 985 165 1000 185 1018 235 1090 248 1095 305 1140 318 1165 405 1190 430 1205 490 1225 575 1228 620 1205 640 1220 680 1198 745 1195 805 1150 870 1148 920 1100 955 1060 990 1010 1040 960 1045 925 1110 900 1140 870 1155 845 1140 810 1118 760 1150 710 1178 695 1165 670 1145 640 1145 600 1185 540 1198 510 1180 492 1148 430 1143 400 1105 355 1077 305 1075 285 1010 260 982 215 988 185 965 175 915 120 865 110 790 108 725 80 690 70 640 70 605 110 520 100 435 105 400 150 378 165 320 185 295 245 240 258 190 305 160 375 152 420 105 450 97 505 95Z"/>
                <path d="M655 575L700 460 795 320 805 230 790 62M795 320L905 250 985 165M845 280L875 210 885 130M670 572L712 462 795 320M645 570L688 470 795 320"/>
                <path d="M612 572L475 380 375 340 245 235M598 562L475 380M375 340L360 260 305 165M626 578L490 390"/>
                <path d="M600 602L315 485 115 480M600 590L510 545 315 485M315 485L280 400 180 305M600 580L520 535"/>
                <path d="M600 635L420 710 268 855 118 862M606 650L430 706 268 855M595 642L440 695M268 855L215 985"/>
                <path d="M648 675L660 770 617 998 510 1178M660 680L665 770 620 998M617 998L695 1075 710 1178"/>
                <path d="M668 672L770 825 785 1010 835 1120M662 688L765 815M680 668L775 820M785 950L860 985 900 1040 955 1060"/>
                <path d="M690 612L940 592 995 600 1090 535 1195 490M690 630L880 596M692 622L900 590M995 600L1035 612 1100 590 1220 580"/>
                <circle cx="645" cy="625" r="48"/><circle cx="645" cy="625" r="36"/><circle cx="645" cy="625" r="24"/><circle cx="645" cy="625" r="12"/><circle cx="645" cy="625" r="4"/>
            </g>
            <g fill="none" stroke="#c3c7cc" stroke-width="1.300">
                <path d="M20 907V969H82M14 964H26V975H14Z"/>
                <path d="M23 891L28 898L33 891M28 898V904M87 955L97 968M97 955L87 968"/>
            </g>
            <g>
                <circle cx="1832" cy="338" r="57" fill="none" stroke="#3e4452" stroke-width="12"/>
                <rect x="1840" y="312" width="20" height="53" fill="#a3a7ad"/>
                <rect x="1840" y="428" width="28" height="19" rx="8" fill="#9a9fa8"/>
                <text x="1882" y="346" class="compass">东</text>
            </g>
            <circle cx="743" cy="614" r="28" fill="#8f9a2c" fill-opacity=".88"/>
            <path d="M744 615V636L749 631L753 640L757 638L753 629H760Z" fill="#fff" stroke="#111" stroke-width=".6"/>
        </svg>
        <div class="viewlabel">[-][俯视][二维线框]</div>
        <aside class="navbar">
            <svg><use href="#v-orbit"/></svg>
            <svg><use href="#v-pan"/></svg>
            <svg><use href="#v-zoom"/></svg>
            <svg><use href="#v-wheel"/></svg>
            <svg><use href="#v-show"/></svg>
        </aside>
        <div class="cmdline">
            <div class="cmd-handle">
                <span class="cmd-dots"></span>
                <svg class="cmd-x"><use href="#w-close"/></svg>
                <svg class="cmd-w"><use href="#b-wrench"/></svg>
            </div>
            <div class="cmd-main">
                <div class="cmd-hist"><div>命令:</div><div>命令:</div></div>
                <div class="cmd-input"><svg><use href="#b-cmd"/></svg><i class="caret c10 cmd-caret"></i><span>_options</span><b class="cmd-up"></b></div>
            </div>
        </div>
    </main>
    <div class="band band-b"></div>

    <footer class="statusbar">
        <div class="layout-tabs">
            <svg class="menu-ico"><use href="#b-menu"/></svg>
            <span class="lay-on">模型</span>
            <span class="lay1">布局1</span>
            <span class="lay2">布局2</span>
            <span class="plus lay-plus"></span>
        </div>
        <div class="sbar">
            <div class="sg g-coord">19282.3448, 1950.6476, 0.0000</div>
            <div class="sg g-model"><span class="model">模型</span><b class="si blue"><svg><use href="#b-grid"/></svg></b><b class="si blue"><svg><use href="#b-dots"/></svg></b><i class="caret c24"></i></div>
            <div class="sg"><b class="si w22"><svg><use href="#b-snap"/></svg></b><b class="si blue ml10"><svg><use href="#b-ortho"/></svg></b><b class="si"><svg><use href="#b-polar"/></svg></b><i class="caret c24"></i><b class="si w26"><svg><use href="#b-box"/></svg></b><i class="caret c24"></i></div>
            <div class="sg"><b class="si w25"><svg><use href="#b-lines"/></svg></b><b class="si w32"><svg><use href="#b-green"/></svg></b><b class="si w32"><svg><use href="#b-cube"/></svg></b><i class="caret c22"></i></div>
            <div class="sg"><b class="si"><svg><use href="#b-gear"/></svg></b><i class="caret c22"></i></div>
            <div class="sg g-unit"><b class="si"><svg><use href="#b-ruler"/></svg></b><span>小数</span><i class="caret c22"></i></div>
            <div class="sg g-annot"><b class="si w32"><svg class="annot"><use href="#b-annot"/></svg></b></div>
            <div class="sg g-last"><b class="si w30"><svg><use href="#b-menu"/></svg></b></div>
        </div>
    </footer>

    <footer class="taskbar">
        <div class="wm"><b class="wm-box"></b><span>tafe.cc</span></div>
        <div class="task t-start"><svg><use href="#t-win"/></svg></div>
        <div class="task t-open"><svg class="t-f"><use href="#t-folder"/></svg></div>
        <div class="task t-open t-gap"><svg><use href="#t-cam"/></svg></div>
        <div class="task t-open t-act">
            <svg class="t-c" viewBox="0 0 28 30"><rect width="28" height="30" rx="1" fill="#c7134e"/><path d="M0 21H28V30H0Z" fill="#7c0c36"/><path d="M14 3L20 19H17.500L16.300 15H11.700L10.500 19H8ZM14 7.500L12.500 12.500H15.500Z" fill="#fff"/><text x="14" y="28" text-anchor="middle" font-size="6.500" fill="#f2d7e0">CAD</text></svg>
        </div>
        <div class="task t-open t-gap2"><svg><use href="#t-red"/></svg></div>
        <div class="tray">
            <span class="tray-up"></span>
            <svg class="tr-mic"><use href="#t-mic"/></svg>
            <svg class="tr-sh"><use href="#t-shield"/></svg>
            <svg class="tr-net"><use href="#t-net"/></svg>
            <svg class="tr-vol"><use href="#t-vol"/></svg>
            <span class="eng">ENG</span>
            <svg class="tr-note"><use href="#t-note"/></svg>
        </div>
    </footer>

    <div class="dialog">
        <div class="dlg-title">
            <svg><use href="#d-a"/></svg><span>选项</span>
            <svg class="dlg-x" viewBox="0 0 16 16"><path d="M1 1L15 15M15 1L1 15" stroke="#444" stroke-width="1"/></svg>
        </div>
        <div class="dlg-profile">
            <span class="pf-l">当前配置:</span>
            <span class="pf-name">&lt;&lt;未命名配置&gt;&gt;</span>
            <svg><use href="#d-dwg"/></svg>
            <span class="pf-r">当前图形:</span>
            <span class="pf-file">1 、对象捕捉.dwg</span>
        </div>
        <div class="dlg-tabs">
            <span class="tab-first">文件</span><span class="on">显示</span><span>打开和保存</span><span>打印和发布</span><span>系统</span><span>用户系统配置</span><span>绘图</span><span>三维建模</span><span>选择集</span><span>配置</span>
        </div>
        <div class="pane">
            <div class="pane-col">
                <div class="group g-window">
                    <span class="legend">窗口元素</span>
                    <div class="theme"><label>颜色主题(M):</label><div class="select"><span>深色</span><svg viewBox="0 0 10 6"><path d="M1 1L5 5L9 1" fill="none" stroke="#444" stroke-width="1"/></svg></div></div>
                    <div class="chk"><b class="box"></b>在图形窗口中显示滚动条(S)</div>
                    <div class="chk on"><b class="box"></b>在工具栏中使用大按钮</div>
                    <div class="chk on"><b class="box"></b>将功能区图标调整为标准大小</div>
                    <div class="chk on"><b class="box"></b>显示工具提示(T)</div>
                    <div class="numrow in1"><input class="num" value="1.000" readonly><span>显示前的秒数</span></div>
                    <div class="chk on in1"><b class="box"></b>在工具提示中显示快捷键</div>
                    <div class="chk on in1"><b class="box"></b>显示扩展的工具提示</div>
                    <div class="numrow in2"><input class="num" value="2.000" readonly><span>延迟的秒数</span></div>
                    <div class="chk on"><b class="box"></b>显示鼠标悬停工具提示</div>
                    <div class="chk on"><b class="box"></b>显示文件选项卡(S)</div>
                    <div class="btnrow"><button class="color-btn">颜色(C)...</button><button class="font-btn">字体(F)...</button></div>
                </div>
                <div class="group g-layout">
                    <span class="legend">布局元素</span>
                    <div class="chk on"><b class="box"></b>显示布局和模型选项卡(L)</div>
                    <div class="chk on"><b class="box"></b>显示可打印区域(B)</div>
                    <div class="chk"><b class="box"></b>显示图纸背景(K)</div>
                    <div class="chk off"><b class="box"></b>显示图纸阴影(E)</div>
                    <div class="chk"><b class="box"></b>新建布局时显示页面设置管理器(G)</div>
                    <div class="chk on"><b class="box"></b>在新布局中创建视口(N)</div>
                </div>
            </div>
            <div class="pane-col">
                <div class="group g-prec">
                    <span class="legend">显示精度</span>
                    <div class="precrow"><svg><use href="#d-dwg"/></svg><input class="num wide" value="1000" readonly><span>圆弧和圆的平滑度(A)</span></div>
                    <div class="precrow"><svg><use href="#d-dwg"/></svg><input class="num wide" value="8" readonly><span>每条多段线曲线的线段数(V)</span></div>
                    <div class="precrow"><svg><use href="#d-dwg"/></svg><input class="num wide" value="0.5" readonly><span>渲染对象的平滑度(J)</span></div>
                    <div class="precrow"><svg><use href="#d-dwg"/></svg><input class="num wide" value="4" readonly><span>每个曲面的轮廓等值线(O)</span></div>
                </div>
                <div class="group g-perf">
                    <span class="legend">显示性能</span>
                    <div class="perfrow"><i></i><div class="chk"><b class="box"></b>利用光栅与 OLE 平移和缩放(P)</div></div>
                    <div class="perfrow"><svg><use href="#d-dwg"/></svg><div class="chk on"><b class="box"></b>仅亮显光栅图像边框(R)</div></div>
                    <div class="perfrow"><svg><use href="#d-dwg"/></svg><div class="chk on"><b class="box"></b>应用实体填充(Y)</div></div>
                    <div class="perfrow"><svg><use href="#d-dwg"/></svg><div class="chk"><b class="box"></b>仅显示文字边框(X)</div></div>
                    <div class="perfrow"><i></i><div class="chk"><b class="box"></b>绘制实体和曲面的真实轮廓(W)</div></div>
                </div>
                <div class="group g-cross">
                    <span class="legend">十字光标大小(Z)</span>
                    <div class="sliderrow"><input class="num wide" value="5" readonly><div class="slider"><b style="left:10px"></b></div></div>
                </div>
                <div class="group g-fade">
                    <span class="legend">淡入度控制</span>
                    <div class="fade-l">外部参照显示(E)</div>
                    <div class="sliderrow"><input class="num wide" value="50" readonly><div class="slider"><b style="left:184px"></b></div></div>
                    <div class="fade-l">在位编辑和注释性表达(I)</div>
                    <div class="sliderrow"><input class="num wide" value="70" readonly><div class="slider"><b style="left:184px"></b></div></div>
                </div>
            </div>
        </div>
        <div class="dlg-foot">
            <button class="ok">确定</button><button>取消</button><button class="dis">应用(A)</button><button>帮助(H)</button>
        </div>
    </div>

    <div class="caption">这样呢就更方便绘图</div>
</div>
</body>
</html>
```

FILE: styles.css
```css
* {
    box-sizing: border-box;
}

html, body {
    margin: 0;
    width: 1920px;
    height: 1080px;
    overflow: hidden;
}

body {
    font-family: "Noto Sans CJK SC", sans-serif;
    background: #1c222e;
    color: #d3d6db;
}

.defs {
    position: absolute;
}

svg {
    display: block;
}

i, b, u, em {
    font-style: normal;
    font-weight: normal;
    text-decoration: none;
}

.app {
    position: relative;
    width: 1920px;
    height: 1080px;
    display: flex;
    flex-direction: column;
    overflow: hidden;
}

.caret {
    display: flex;
    flex: none;
    align-items: center;
    justify-content: center;
}

.caret::before {
    content: "";
    border-left: 4px solid transparent;
    border-right: 4px solid transparent;
    border-top: 5.500px solid #c5c9cf;
}

.caret.dim::before {
    border-top-color: #5d6371;
}

.c10 { width: 10px; }
.c12 { width: 12px; }
.c16 { width: 16px; }
.c18 { width: 18px; }
.c22 { width: 22px; }
.c24 { width: 24px; }

/* title bar */
.titlebar {
    height: 36px;
    flex: none;
    display: flex;
    align-items: center;
    padding: 0 0 2px 18px;
    background: #1c222e;
}

.logo {
    width: 30px;
    height: 26px;
}

.titlebar > .caret:first-of-type {
    margin-left: 3px;
    margin-right: 6px;
}

.qa {
    width: 30px;
    height: 22px;
    flex: none;
}

.qa-redo {
    width: 28px;
}

.qa-more {
    width: 18px;
    height: 10px;
    flex: none;
    background:
        linear-gradient(#c5c9cf, #c5c9cf) 5px 0 / 8px 1.500px no-repeat,
        linear-gradient(to bottom right, transparent 50%, #c5c9cf 50%) 5px 3px / 4px 5px no-repeat,
        linear-gradient(to bottom left, transparent 50%, #c5c9cf 50%) 9px 3px / 4px 5px no-repeat;
}

.share {
    margin-left: 2px;
    width: 32px;
    font-size: 15px;
    color: #c9ccd2;
}

.app-name {
    margin-left: 29px;
    width: 198px;
    font-size: 16.500px;
    color: #d7dade;
}

.doc-name {
    width: 437px;
    padding-left: 1px;
    font-size: 15.600px;
    color: #d7dade;
    white-space: nowrap;
}

.arrow-r {
    width: 0;
    height: 0;
    margin-left: 2px;
    border-left: 5px solid #c5c9cf;
    border-top: 5px solid transparent;
    border-bottom: 5px solid transparent;
}

.search {
    margin-left: 9px;
    width: 223px;
    height: 26px;
    padding-left: 4px;
    background: #3b4250;
    border-radius: 2px;
    color: #a2a7b0;
    font-size: 14px;
    font-style: italic;
    line-height: 24px;
}

.top-search {
    margin-left: 4px;
    width: 20px;
    height: 20px;
}

.top-user {
    margin-left: 10px;
    width: 22px;
    height: 22px;
}

.login {
    margin-left: 8px;
    font-size: 15px;
    color: #d3d6db;
}

.login-caret {
    margin-left: 72px;
}

.top-cart {
    margin-left: 11px;
    width: 20px;
    height: 22px;
}

.top-tri {
    margin-left: 7px;
    width: 22px;
    height: 22px;
}

.top-sep {
    margin-left: 14px;
    width: 1px;
    height: 26px;
    background: #3a404c;
}

.top-help {
    margin-left: 8px;
    width: 22px;
    height: 22px;
}

.titlebar .top-help + .caret {
    margin-left: 8px;
}

.winbtns {
    margin-left: auto;
    display: flex;
    margin-right: 18px;
    gap: 43px;
}

.winbtns svg {
    width: 16px;
    height: 16px;
}

/* menu */
.menubar {
    height: 25px;
    flex: none;
    display: flex;
    align-items: center;
    gap: 27.600px;
    padding: 0 0 4px 15px;
    font-size: 15px;
    color: #c2c6cc;
    background: #1c222e;
    border-bottom: 1px solid #3c424e;
}

.subbtns {
    margin-left: auto;
    margin-right: 13px;
    display: flex;
    gap: 26px;
}

.subbtns svg {
    width: 15px;
    height: 15px;
}

.ribtabs {
    height: 30px;
    flex: none;
    display: flex;
    align-items: flex-end;
    padding-left: 5px;
    font-size: 15px;
    color: #c2c6cc;
    background: #1f2532;
}

.ribtabs span {
    height: 24px;
    line-height: 21px;
    padding: 0 10px;
    margin-right: 4px;
}

.ribtabs .on {
    background: #3b4150;
    color: #f0f1f3;
}

.ribtabs .ext {
    letter-spacing: .3px;
}

.rib-switch {
    margin-left: 23px;
    margin-bottom: 7px;
    width: 20px;
    height: 11px;
    background: #b4b8be;
}

.ribtabs .caret {
    height: 22px;
}

/* ribbon */
.ribbon {
    height: 124px;
    flex: none;
    display: flex;
    background: #3a4050;
    border-top: 1px solid #2f3542;
    font-size: 14.500px;
    color: #5f6574;
}

.rpanel {
    display: flex;
    flex-direction: column;
    flex: none;
    border-right: 1px solid #2b303c;
}

.rbody {
    flex: 1;
    display: flex;
    padding-top: 3px;
}

.rtitle {
    height: 25px;
    display: flex;
    align-items: center;
    justify-content: center;
    gap: 3px;
    position: relative;
    padding-bottom: 1px;
    font-size: 15px;
    color: #cfd2d7;
    background: #363c4b;
    border-top: 1px solid #3f4554;
}

.p-draw { width: 265px; }
.p-modify { width: 283px; }
.p-note { width: 197px; }
.p-layer { width: 314px; }
.p-block { width: 216px; }
.p-prop { width: 279px; }
.p-group { width: 86px; }
.p-util { width: 95px; }
.p-clip { width: 109px; }
.p-view { width: 76px; border-right: 0; }

.big {
    flex: none;
    display: flex;
    flex-direction: column;
    align-items: center;
    padding-top: 3px;
    white-space: nowrap;
    line-height: 20px;
    text-align: center;
}

.big svg {
    width: 44px;
    height: 44px;
    flex: none;
    margin-bottom: 2px;
}

.big .caret {
    height: 10px;
    margin-top: 1px;
}

.w42 { width: 42px; }
.w46 { width: 46px; }
.w48 { width: 48px; }
.w50 { width: 50px; }
.w52 { width: 52px; }
.w54 { width: 54px; }
.w56 { width: 56px; }
.w58 { width: 58px; }
.w62 { width: 62px; }
.w64 { width: 64px; }
.w76 { width: 76px; }

.col3 {
    display: grid;
    grid-auto-rows: 31px;
    align-items: center;
}

.sm {
    display: flex;
    align-items: center;
    white-space: nowrap;
}

.sm svg {
    width: 18px;
    height: 18px;
    flex: none;
    margin-right: 10px;
}

.col-draw { margin-left: 10px; }
.col-draw .sm svg { margin-right: 6px; }
.col-note { margin-left: 3px; }
.col-block { margin-left: 4px; }
.col-block .sm .caret { margin-left: 8px; }
.col-prop { margin-left: 4px; width: 20px; }
.col-prop .sm svg { margin-right: 0; }
.wheel { width: 20px; height: 24px; }

.modify-grid {
    display: grid;
    grid-template-columns: 77px 74px 91px auto;
    grid-auto-rows: 31px;
    align-items: center;
    padding-left: 7px;
}

.layer-side {
    width: 258px;
    display: flex;
    flex-direction: column;
}

.layer-drop {
    height: 27px;
    margin-top: 2px;
    display: flex;
    align-items: center;
    padding-left: 6px;
    gap: 4px;
    background: #464c5e;
    font-size: 13px;
}

.layer-drop svg {
    width: 18px;
    height: 20px;
}

.swatch {
    width: 16px;
    height: 20px;
    background: #6a7080;
    flex: none;
}

.layer-drop span {
    margin-left: 4px;
}

.drop-caret {
    margin-left: auto;
}

.layer-row {
    height: 31px;
    margin-top: 1px;
    display: flex;
    align-items: center;
    padding-left: 1px;
    gap: 10px;
}

.layer-row svg {
    width: 20px;
    height: 20px;
}

.layer-row span {
    margin-left: -1px;
    white-space: nowrap;
}

.prop-drops {
    width: 199px;
    margin: 2px 0 0 2px;
    display: flex;
    flex-direction: column;
    gap: 4px;
}

.pdrop {
    height: 26px;
    display: flex;
    align-items: center;
    padding-left: 7px;
    background: #474d62;
    font-size: 14px;
}

.pdrop.first {
    background: #3d4354;
}

.pdrop.first span {
    margin-left: 6px;
}

.pdrop u {
    width: 80px;
    height: 1px;
    background: #9ca0aa;
}

.pdrop .caret {
    margin-left: auto;
}

.launcher {
    position: absolute;
    right: 8px;
    bottom: 6px;
    width: 6px;
    height: 6px;
    border-right: 1px solid #8f939c;
    border-bottom: 1px solid #8f939c;
}

.active-tool {
    width: 28px;
    height: 27px;
    margin-left: -5px;
    padding-left: 4px;
    border: 1px solid #5a9ac2;
}

.active-tool svg {
    margin-right: 0;
}

.col-gr { margin-left: 11px; }
.p-util .col3 { margin-left: 1px; }
.p-clip .col3 { margin-left: 14px; }
.p-clip .sm svg { margin-right: 0; }

/* file tabs */
.doctabs {
    height: 33px;
    flex: none;
    display: flex;
    align-items: flex-end;
    padding-left: 19px;
    background: #1f2532;
    font-size: 15.500px;
    color: #cfd2d7;
}

.menu-ico {
    width: 21px;
    height: 20px;
    margin-bottom: 5px;
    flex: none;
}

.dsep {
    width: 1px;
    height: 22px;
    margin: 0 0 5px 12px;
    background: #3f4553;
    transform: skewX(-20deg);
}

.start {
    margin-left: 18px;
    width: 42px;
    line-height: 31px;
}

.doc-on {
    width: 152px;
    height: 30px;
    display: flex;
    align-items: center;
    padding: 0 0 2px 20px;
    color: #eceef0;
    background:
        linear-gradient(105deg, transparent 7px, #3b4150 8px) left / 50% 100% no-repeat,
        linear-gradient(105deg, #3b4150 calc(100% - 9px), transparent calc(100% - 8px)) right / 50% 100% no-repeat;
}

.doc-on span {
    width: 105px;
    white-space: nowrap;
}

.doc-on svg {
    width: 11px;
    height: 11px;
}

.plus {
    margin: 0 0 6px 12px;
    width: 19px;
    height: 19px;
    flex: none;
    background:
        linear-gradient(#d5d8dc, #d5d8dc) center / 100% 2px no-repeat,
        linear-gradient(#d5d8dc, #d5d8dc) center / 2px 100% no-repeat;
}

.band {
    height: 4px;
    flex: none;
    background: #3c4250;
}

.band-b {
    height: 5px;
}

/* drawing area */
.canvas {
    position: relative;
    flex: 1;
    overflow: hidden;
    background-color: #222731;
    background-image:
        linear-gradient(#4d535f 1px, transparent 1px),
        linear-gradient(90deg, #4d535f 1px, transparent 1px),
        linear-gradient(#2f343f 2px, transparent 2px),
        linear-gradient(90deg, #2f343f 2px, transparent 2px);
    background-size: 161px 161px, 161px 161px, 32.200px 32.200px, 32.200px 32.200px;
    background-position: 0 56px, 98px 0, 0 24px, 1px 0;
}

.drawing {
    position: absolute;
    left: 0;
    top: 0;
    width: 1920px;
    height: 737px;
}

.compass {
    font-size: 18px;
    fill: #a6aab1;
}

.viewlabel {
    position: absolute;
    left: 4px;
    top: 6px;
    font-size: 15.500px;
    letter-spacing: .3px;
    line-height: 20px;
    color: #d5d8dc;
}

.navbar {
    position: absolute;
    left: 1877px;
    top: 228px;
    width: 40px;
    height: 258px;
    padding-top: 24px;
    display: flex;
    flex-direction: column;
    align-items: center;
    gap: 22px;
    background: #5b606b;
    border-radius: 6px;
}

.navbar svg {
    width: 30px;
    height: 24px;
    opacity: .75;
}

.cmdline {
    position: absolute;
    left: 386px;
    top: 670px;
    width: 1149px;
    height: 67px;
    display: flex;
}

.cmd-handle {
    width: 29px;
    padding-right: 5px;
    background: #3a4050;
    display: flex;
    flex-direction: column;
    align-items: center;
}

.cmd-dots {
    width: 20px;
    height: 1px;
    margin-top: 6px;
    border-top: 1px dotted #a8acb2;
}

.cmd-x {
    width: 13px;
    height: 13px;
    margin-top: 14px;
}

.cmd-w {
    width: 18px;
    height: 22px;
    margin-top: 8px;
}

.cmd-main {
    flex: 1;
    display: flex;
    flex-direction: column;
}

.cmd-hist {
    height: 42px;
    padding: 1px 0 0 3px;
    background: #a3a3a3;
    border-bottom: 1px solid #222;
    font-size: 14px;
    line-height: 19px;
    color: #222;
}

.cmd-input {
    flex: 1;
    display: flex;
    align-items: center;
    padding-left: 5px;
    background: #c3c4c4;
    font-family: "Liberation Mono", monospace;
    font-size: 14px;
    color: #222;
}

.cmd-input svg {
    width: 20px;
    height: 20px;
}

.cmd-caret {
    margin: 0 4px 0 2px;
}

.cmd-caret::before {
    border-top-color: #555;
}

.cmd-up {
    margin-left: auto;
    margin-right: 5px;
    border-left: 4px solid transparent;
    border-right: 4px solid transparent;
    border-bottom: 6px solid #555;
}

/* status bar */
.statusbar {
    height: 33px;
    flex: none;
    display: flex;
    background: #222835;
}

.layout-tabs {
    display: flex;
    align-items: center;
    padding: 0 0 3px 19px;
    font-size: 15px;
    color: #cfd2d7;
    width: 1038px;
}

.layout-tabs .menu-ico {
    margin-bottom: 0;
}

.lay-on {
    margin-left: 15px;
    width: 67px;
    height: 32px;
    line-height: 30px;
    text-align: center;
    color: #eceef0;
    background:
        linear-gradient(105deg, transparent 7px, #3b4150 8px) left / 50% 100% no-repeat,
        linear-gradient(105deg, #3b4150 calc(100% - 9px), transparent calc(100% - 8px)) right / 50% 100% no-repeat;
}

.lay1 {
    margin-left: 10px;
}

.lay2 {
    margin-left: 32px;
}

.lay-plus {
    margin: 0 0 0 32px;
    width: 17px;
    height: 17px;
}

.sbar {
    flex: 1;
    display: flex;
    gap: 2px;
    color: #d5d8dc;
    font-size: 14.500px;
}

.sg {
    flex: none;
    height: 33px;
    display: flex;
    align-items: center;
    background: #2e3544;
    border-radius: 2px;
}

.g-coord {
    width: 228px;
    padding-left: 4px;
    justify-content: center;
}

.model {
    width: 40px;
    padding-left: 3px;
}

.si {
    display: flex;
    align-items: center;
    justify-content: center;
    width: 28px;
    height: 28px;
    flex: none;
}

.si svg {
    width: 22px;
    height: 22px;
}

.si.blue {
    background: #5b8ec2;
}

.ml10 { margin-left: 10px; }
.si.w22 { width: 22px; }
.si.w25 { width: 25px; }
.si.w26 { width: 26px; }
.si.w30 { width: 30px; }
.si.w32 { width: 32px; }

.g-unit {
    width: 121px;
    margin-left: 1px;
}

.g-unit span {
    margin-left: 8px;
    width: 32px;
    white-space: nowrap;
}

.g-unit .caret {
    margin-left: auto;
}

.g-annot {
    margin-left: 2px;
}

.g-last {
    margin-left: 6px;
}

.si svg.annot {
    width: 22px;
    height: 28px;
}

/* windows taskbar */
.taskbar {
    position: relative;
    height: 53px;
    flex: none;
    display: flex;
    background: #1b1f28;
}

.wm {
    position: absolute;
    left: 11px;
    top: 3px;
    display: flex;
    align-items: center;
    gap: 10px;
    height: 38px;
    font-size: 38px;
    line-height: 50px;
    font-weight: bold;
    color: #4c4f55;
}

.wm-box {
    width: 39px;
    height: 38px;
    border-radius: 8px;
    background: #55585e;
}

.task {
    position: relative;
    display: flex;
    align-items: center;
    justify-content: center;
    flex: none;
}

.task svg {
    width: 30px;
    height: 30px;
    margin-top: 2px;
}

.t-start {
    width: 50px;
    padding-left: 10px;
}

.t-start svg {
    width: 20px;
    height: 20px;
    margin-top: 4px;
}

.t-open {
    width: 51px;
    margin-left: 19px;
    border-bottom: 3px solid #8ac3ee;
}

.t-gap {
    margin-left: 11px;
}

.t-act {
    width: 61px;
    margin-left: 6px;
    background: #3a3e48;
}

.t-gap2 {
    margin-left: 6px;
}

svg.t-f {
    width: 28px;
    height: 24px;
}

svg.t-c {
    width: 27px;
    height: 30px;
}

.tray {
    margin-left: auto;
    display: flex;
    align-items: center;
    height: 53px;
    padding-right: 32px;
    font-size: 15px;
    color: #d5d8dc;
}

.tray-up {
    width: 12px;
    height: 12px;
    border-left: 1.500px solid #d0d3d7;
    border-top: 1.500px solid #d0d3d7;
    transform: rotate(45deg);
    margin-top: 6px;
}

.tr-mic { margin-left: 16px; width: 16px; height: 28px; }
.tr-sh { margin-left: 14px; width: 19px; height: 24px; }
.tr-net { margin-left: 10px; width: 24px; height: 24px; }
.tr-vol { margin-left: 4px; width: 20px; height: 24px; }
.eng { margin-left: 12px; width: 30px; }
.tr-note { margin-left: 20px; width: 22px; height: 26px; }

/* options dialog */
.dialog {
    position: absolute;
    left: 918px;
    top: 237px;
    width: 938px;
    height: 665px;
    background: #f0f0f0;
    font-family: "Liberation Serif", "Noto Sans CJK SC", serif;
    font-size: 15px;
    color: #2a2a2a;
    display: flex;
    flex-direction: column;
}

.dlg-title {
    height: 38px;
    display: flex;
    align-items: center;
    padding: 0 0 2px 10px;
    background: #fff;
    font-family: "Noto Sans CJK SC", sans-serif;
}

.dlg-title > svg:first-child {
    width: 19px;
    height: 20px;
    margin-right: 5px;
}

.dlg-x {
    margin-left: auto;
    margin-right: 14px;
    width: 14px;
    height: 14px;
}

.dlg-profile {
    height: 30px;
    display: flex;
    align-items: center;
    padding: 0 0 3px 16px;
    white-space: nowrap;
}

.pf-l { width: 144px; margin-top: -2px; }
.pf-name { width: 350px; margin-top: -4px; }
.dlg-profile svg { width: 19px; height: 20px; }
.pf-r { margin-left: 11px; width: 150px; margin-top: -6px; }
.pf-file { margin-top: -6px; letter-spacing: .8px; }

.dlg-tabs {
    height: 22px;
    margin-left: 18px;
    display: grid;
    grid-template-columns: 59px 62px 84px 85px 59px 101px 59px 71px 59px 58px;
    line-height: 21px;
    white-space: nowrap;
}

.dlg-tabs span {
    padding-left: 6px;
    border-top: 1px solid #dcdcdc;
    border-right: 1px solid #dcdcdc;
}

.dlg-tabs .tab-first {
    padding-left: 14px;
    border-left: 1px solid #dcdcdc;
}

.dlg-tabs .on {
    background: #fff;
    border-color: #e4e4e4;
    margin-top: -1px;
    height: 23px;
}

.pane {
    height: 528px;
    margin: 0 18px 0 17px;
    padding: 21px 0 0 13px;
    display: grid;
    grid-template-columns: 425px 424px;
    column-gap: 16px;
    align-content: start;
    background: #fff;
    border: 1px solid #e2e2e2;
    border-top: 0;
}

.group {
    position: relative;
    border: 1px solid #e3e3e3;
}

.legend {
    position: absolute;
    left: 7px;
    top: -11px;
    padding: 0 1px;
    line-height: 20px;
    background: #fff;
}

.chk {
    display: flex;
    align-items: center;
    height: 20px;
    padding-bottom: 2px;
    white-space: nowrap;
}

.box {
    position: relative;
    width: 16px;
    height: 16px;
    margin: 2px 5px 0 0;
    flex: none;
    border: 1px solid #333;
    background: #fff;
}

.chk.on .box::after {
    content: "";
    position: absolute;
    left: 3px;
    top: 1.500px;
    width: 8px;
    height: 5px;
    border-left: 1.300px solid #555;
    border-bottom: 1.300px solid #555;
    transform: rotate(-45deg) translate(-1px, 2px);
}

.chk.off {
    color: #a8a8a8;
    margin-left: 26px;
}

.chk.off .box {
    border-color: #d4d4d4;
}

.num {
    width: 60px;
    height: 23px;
    padding: 1px 0 0 2px;
    border: 1px solid #7a7a7a;
    outline: 0;
    background: #fff;
    font-family: "Liberation Mono", monospace;
    font-size: 13.500px;
    color: #2a2a2a;
    flex: none;
}

.num.wide {
    width: 64px;
}

.g-window {
    height: 330px;
    padding: 12px 0 0 14px;
    display: grid;
    grid-template-rows: 50px 26px 22px 25px 23px 25px 24px 24px 23px 21px 27px 21px;
    align-items: start;
}

.theme {
    display: flex;
    align-items: center;
    height: 22px;
    margin-top: 2px;
}

.theme label {
    width: 112px;
    margin-top: -2px;
    letter-spacing: .4px;
}

.select {
    width: 213px;
    height: 22px;
    margin-top: -3px;
    padding: 0 5px 2px;
    display: flex;
    align-items: center;
    justify-content: space-between;
    background: #e1e1e1;
    border: 1px solid #adadad;
}

.select svg {
    width: 10px;
    height: 6px;
}

.in1 {
    margin-left: 32px;
}

.in2 {
    margin-left: 42px;
}

.numrow {
    display: flex;
    gap: 7px;
    line-height: 14px;
}

.btnrow {
    display: flex;
    margin-left: 52px;
    gap: 18px;
}

button {
    font: inherit;
    color: inherit;
    padding: 0 0 4px;
    height: 21px;
    background: #e1e1e1;
    border: 1px solid #adadad;
}

.color-btn {
    width: 126px;
    letter-spacing: 1.500px;
}

.font-btn {
    width: 110px;
    letter-spacing: 1.500px;
}

.g-layout {
    margin-top: 17px;
    height: 153px;
    padding: 11px 0 0 14px;
    display: grid;
    grid-template-rows: 22px 27px 24px 21px 25px 20px;
    align-items: start;
}

.g-prec {
    height: 130px;
    padding: 14px 0 0 15px;
    display: grid;
    grid-template-rows: 28px 28px 30px 23px;
    align-items: start;
}

.precrow {
    display: flex;
    align-items: center;
    height: 23px;
}

.precrow svg {
    width: 18px;
    height: 20px;
    margin-top: 4px;
    margin-right: 13px;
}

.precrow span {
    margin: -6px 0 0 23px;
}

.g-perf {
    margin-top: 14px;
    height: 126px;
    padding: 11px 0 0 15px;
    display: grid;
    grid-template-rows: 23px 22px 23px 22px 20px;
    align-items: start;
}

.perfrow {
    display: flex;
    align-items: center;
}

.perfrow svg, .perfrow i {
    width: 18px;
    height: 20px;
    margin-right: 13px;
    flex: none;
}

.g-cross {
    margin-top: 15px;
    height: 41px;
    padding: 14px 0 0 14px;
}

.sliderrow {
    display: flex;
    align-items: center;
    height: 23px;
}

.slider {
    position: relative;
    width: 253px;
    height: 6px;
    margin-left: 26px;
    background: #e4e4e4;
}

.slider b {
    position: absolute;
    top: -10px;
    width: 14px;
    height: 26px;
    background: #0a78d2;
}

.g-fade {
    margin-top: 15px;
    height: 109px;
    padding: 9px 0 0 14px;
    display: grid;
    grid-template-rows: 24px 25px 22px 23px;
    align-items: start;
}

.fade-l {
    line-height: 20px;
}

.dlg-foot {
    display: flex;
    gap: 10px;
    padding: 14px 0 0 499px;
}

.dlg-foot button {
    width: 98px;
    height: 24px;
}

.dlg-foot .ok {
    border: 2px solid #14688e;
}

.dlg-foot .dis {
    background: #cccccc;
    border-color: #c4c4c4;
    color: #8a8a8a;
}

.caption {
    position: absolute;
    left: 0;
    right: 0;
    top: 892px;
    text-align: center;
    font-size: 55.500px;
    line-height: 78px;
    font-weight: bold;
    color: #fff;
    -webkit-text-stroke: 8px #000;
    paint-order: stroke fill;
}
```
